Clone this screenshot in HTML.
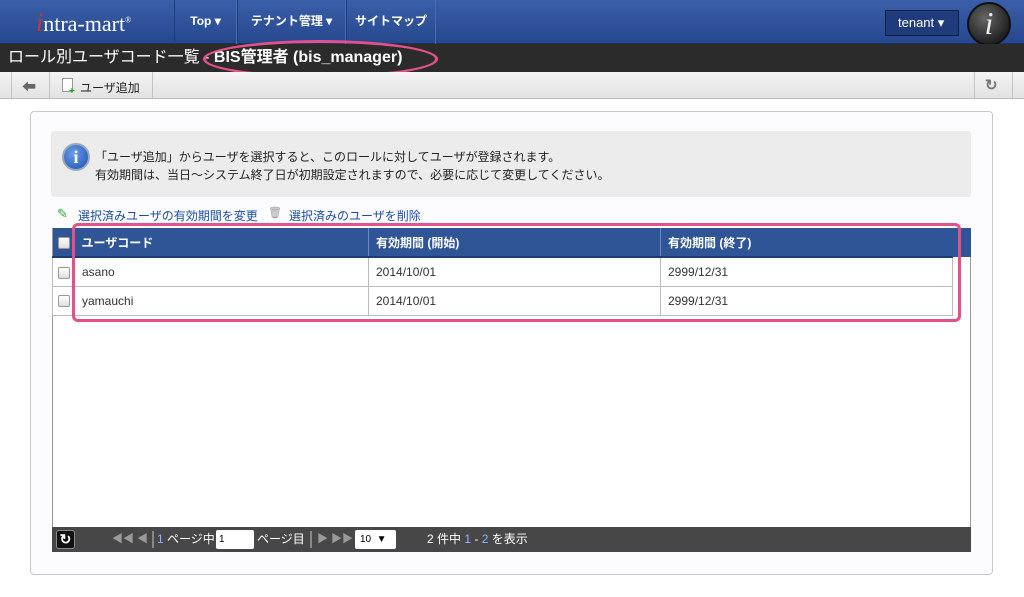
<!DOCTYPE html>
<html><head><meta charset="utf-8"><style>
*{margin:0;padding:0;box-sizing:border-box}
body{width:1024px;height:597px;overflow:hidden;background:#fff;font-family:"Liberation Sans","Noto Sans CJK JP",sans-serif;font-size:12px;color:#333;position:relative}
.abs{position:absolute}
#hdr{left:0;top:0;width:1024px;height:44px;background:linear-gradient(#3a5ea8,#26488e);border-bottom:1px solid #1c3166}
.nav{top:0;height:44px;border-left:1px solid #1f3d7a;border-right:1px solid #4a6cb3;color:#fff;font-weight:bold;font-size:12px;line-height:42px;text-align:center}
#tbar{left:0;top:44px;width:1024px;height:28px;background:#2b2b2b;color:#fff;font-size:16px;line-height:28px;padding-left:8px}
#tool{left:0;top:72px;width:1024px;height:27px;background:linear-gradient(#f4f4f4,#e2e2e2);border-bottom:1px solid #bbb}
.sep{top:72px;width:1px;height:27px;background:#c4c4c4}
#panel{left:30px;top:111px;width:963px;height:464px;border:1px solid #c8c8c8;border-radius:4px;background:#fcfcfe}
#info{left:51px;top:131px;width:920px;height:66px;background:#ececec;border-radius:3px}
table{border-collapse:collapse}
td{border:1px solid #bbb;height:29px;padding-left:7px;font-size:12px}
th{background:#2f5597;color:#fff;text-align:left;height:29px;padding-left:7px;font-size:12px;border-right:1px solid #6d86bb;border-bottom:2px solid #1e3a72}
.cb{display:inline-block;width:12px;height:12px;border:1px solid #999;border-radius:2px;background:linear-gradient(#fff,#ddd);vertical-align:middle}
#pager{left:52px;top:527px;width:919px;height:25px;background:#474747;color:#fff;font-size:12px;line-height:25px}
</style></head><body>
<div id="hdr" class="abs"></div>
<div class="abs" style="left:36px;top:8px;color:#fff;font-family:'Liberation Serif',serif;font-size:22px;"><span style="color:#c33;font-size:26px;font-style:italic">i</span>ntra-mart<sup style="font-size:8px">®</sup></div>
<div class="abs nav" style="left:174px;width:63px">Top ▾</div>
<div class="abs nav" style="left:237px;width:109px">テナント管理 ▾</div>
<div class="abs nav" style="left:346px;width:90px">サイトマップ</div>
<div class="abs" style="left:885px;top:10px;width:74px;height:26px;background:#1f3b7c;border:1px solid #0e1f44;color:#fff;font-size:13px;line-height:24px;padding-left:12px">tenant ▾</div>
<div class="abs" style="left:967px;top:2px;width:44px;height:44px;border-radius:50%;background:radial-gradient(circle at 40% 35%,#666,#222 70%);border:2px solid #111;color:#eee;font-family:'Liberation Serif',serif;font-style:italic;font-size:32px;text-align:center;line-height:38px">i</div>
<div id="tbar" class="abs">ロール別ユーザコード一覧 - <b>BIS管理者 (bis_manager)</b></div>
<div class="abs" style="left:203px;top:40px;width:235px;height:38px;border:3px solid #e4508a;border-radius:50%"></div>
<div id="tool" class="abs"></div>
<div class="abs sep" style="left:11px"></div><div class="abs sep" style="left:49px"></div><div class="abs sep" style="left:152px"></div><div class="abs sep" style="left:974px"></div><div class="abs sep" style="left:1012px"></div>
<div class="abs" style="left:22px;top:77px;color:#666;font-size:14px">⬅</div>
<div class="abs" style="left:62px;top:78px;width:11px;height:14px;border:1px solid #999;background:#fff"></div>
<div class="abs" style="left:69px;top:86px;color:#2a2;font-size:10px;font-weight:bold">+</div>
<div class="abs" style="left:80px;top:79px;font-size:12px;color:#222">ユーザ追加</div>
<div class="abs" style="left:985px;top:76px;color:#777;font-size:15px;font-weight:bold">↻</div>
<div id="panel" class="abs"></div>
<div id="info" class="abs"></div>
<div class="abs" style="left:62px;top:143px;width:28px;height:28px;border-radius:50%;background:radial-gradient(circle at 40% 35%,#6a9de8,#1c4fb0);border:2px solid #9ab;color:#fff;font-weight:bold;font-size:18px;text-align:center;line-height:24px;font-family:'Liberation Serif',serif">i</div>
<div class="abs" style="left:95px;top:148px;font-size:12px;line-height:18px;color:#222">「ユーザ追加」からユーザを選択すると、このロールに対してユーザが登録されます。<br>有効期間は、当日～システム終了日が初期設定されますので、必要に応じて変更してください。</div>
<div class="abs" style="left:57px;top:206px;color:#3a3;font-size:13px">✎</div>
<div class="abs" style="left:78px;top:207px;color:#1a4fa0;font-size:12px">選択済みユーザの有効期間を変更</div>
<div class="abs" style="left:268px;top:206px;color:#999;font-size:11px">🗑</div>
<div class="abs" style="left:289px;top:207px;color:#1a4fa0;font-size:12px">選択済みのユーザを削除</div>
<div class="abs" style="left:52px;top:228px;width:919px;height:324px;border:1px solid #999;background:#fff"></div>
<table class="abs" style="left:52px;top:228px;width:901px">
<tr><th style="width:22px;padding:0 0 0 5px;border-right:none"><span class="cb"></span></th><th style="width:294px">ユーザコード</th><th style="width:292px">有効期間 (開始)</th><th>有効期間 (終了)</th></tr>
<tr><td style="padding-left:5px"><span class="cb"></span></td><td>asano</td><td>2014/10/01</td><td>2999/12/31</td></tr>
<tr><td style="padding-left:5px"><span class="cb"></span></td><td>yamauchi</td><td>2014/10/01</td><td>2999/12/31</td></tr>
</table>
<div class="abs" style="left:952px;top:228px;width:19px;height:29px;background:#2f5597"></div>
<div class="abs" style="left:72px;top:223px;width:889px;height:99px;border:3px solid #e4508a;border-radius:6px"></div>
<div id="pager" class="abs">
<span class="abs" style="left:4px;top:3px;width:19px;height:19px;background:#111;border:1px solid #888;border-radius:3px;text-align:center;line-height:17px;font-weight:bold;font-size:14px">↻</span>
<span class="abs" style="left:60px;color:#999;font-size:11px">◀◀ ◀</span>
<span class="abs" style="left:100px;top:4px;width:2px;height:17px;background:#888"></span>
<span class="abs" style="left:105px"><span style="color:#8bb4ff">1</span> ページ中</span>
<span class="abs" style="left:164px;top:3px;width:38px;height:19px;background:#fff;border-radius:2px;color:#000;font-size:10px;line-height:19px;padding-left:3px">1</span>
<span class="abs" style="left:205px">ページ目</span>
<span class="abs" style="left:258px;top:4px;width:2px;height:17px;background:#888"></span>
<span class="abs" style="left:265px;color:#999;font-size:11px">▶ ▶▶</span>
<span class="abs" style="left:303px;top:3px;width:41px;height:19px;background:#fff;border-radius:2px;color:#000;font-size:10px;line-height:19px;padding-left:5px">10 &nbsp;▼</span>
<span class="abs" style="left:375px">2 件中 <span style="color:#8bb4ff">1</span> - <span style="color:#8bb4ff">2</span> を表示</span>
</div>
</body></html>
